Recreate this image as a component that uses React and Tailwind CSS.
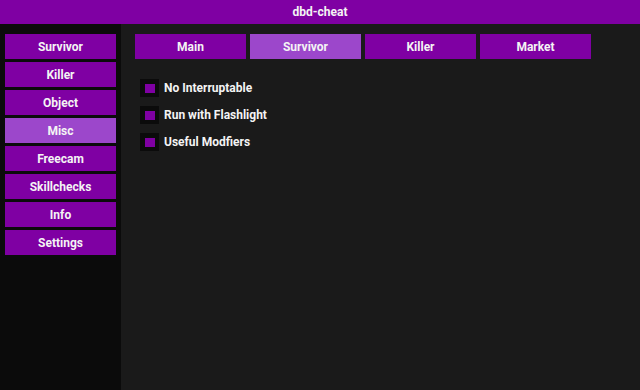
import { useState } from 'react'

const sideItems = ['Survivor', 'Killer', 'Object', 'Misc', 'Freecam', 'Skillchecks', 'Info', 'Settings']
const tabs = ['Main', 'Survivor', 'Killer', 'Market']
const options = ['No Interruptable', 'Run with Flashlight', 'Useful Modfiers']

export default function App() {
  const [side, setSide] = useState('Misc')
  const [tab, setTab] = useState('Survivor')
  const [checked, setChecked] = useState({ 'No Interruptable': true, 'Run with Flashlight': true, 'Useful Modfiers': true })

  return (
    <div
      className="flex flex-col w-[640px] h-[390px] overflow-hidden text-[#f4f4f4] font-bold text-[12px]"
      style={{ fontFamily: 'Roboto, "Liberation Sans", Arial, sans-serif' }}
    >
      <div className="h-[24px] bg-[#7f00a3] flex items-center justify-center shrink-0">dbd-cheat</div>
      <div className="flex flex-1 min-h-0">
        <div className="w-[121px] bg-[#0b0b0b] flex flex-col gap-[3px] px-[5px] pt-[10px]">
          {sideItems.map((s) => (
            <button
              key={s}
              onClick={() => setSide(s)}
              className={`h-[25px] w-full flex items-center justify-center ${side === s ? 'bg-[#9c47cb]' : 'bg-[#7f00a3]'}`}
            >
              {s}
            </button>
          ))}
        </div>
        <div className="flex-1 bg-[#1a1a1a] pl-[14px] pt-[10px]">
          <div className="flex gap-[4px]">
            {tabs.map((t) => (
              <button
                key={t}
                onClick={() => setTab(t)}
                className={`h-[25px] w-[111px] flex items-center justify-center ${tab === t ? 'bg-[#9c47cb]' : 'bg-[#7f00a3]'}`}
              >
                {t}
              </button>
            ))}
          </div>
          <div className="flex flex-col gap-[9px] pl-[5px] pt-[20px]">
            {options.map((o) => (
              <label key={o} className="flex items-center gap-[5px] h-[18px] cursor-pointer">
                <span
                  onClick={() => setChecked({ ...checked, [o]: !checked[o] })}
                  className="w-[19px] h-[18px] bg-[#0b0b0b] flex items-center justify-center"
                >
                  {checked[o] && <span className="w-[10px] h-[9px] bg-[#7f00a3]" />}
                </span>
                <span>{o}</span>
              </label>
            ))}
          </div>
        </div>
      </div>
    </div>
  )
}
